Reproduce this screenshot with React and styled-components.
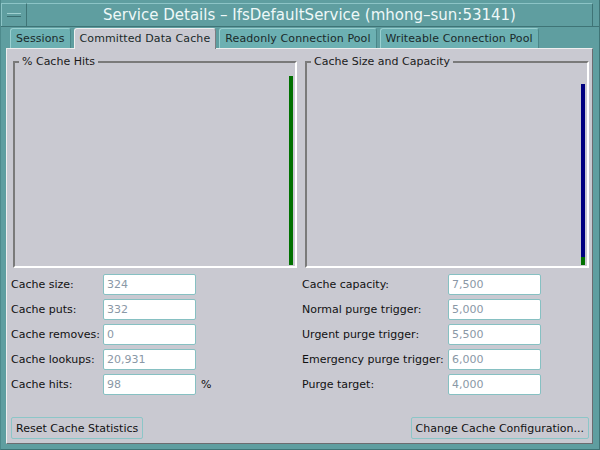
import React from "react";
import styled, { createGlobalStyle } from "styled-components";

const GlobalStyle = createGlobalStyle`
  html, body {
    margin: 0;
    padding: 0;
    background: #5f9ea0;
  }
  body {
    font-family: "DejaVu Sans", "Liberation Sans", sans-serif;
  }
`;

const leftStats = [
  { label: "Cache size:", value: "324" },
  { label: "Cache puts:", value: "332" },
  { label: "Cache removes:", value: "0" },
  { label: "Cache lookups:", value: "20,931" },
  { label: "Cache hits:", value: "98", unit: "%" },
];

const rightStats = [
  { label: "Cache capacity:", value: "7,500" },
  { label: "Normal purge trigger:", value: "5,000" },
  { label: "Urgent purge trigger:", value: "5,500" },
  { label: "Emergency purge trigger:", value: "6,000" },
  { label: "Purge target:", value: "4,000" },
];

const tabs = [
  "Sessions",
  "Committed Data Cache",
  "Readonly Connection Pool",
  "Writeable Connection Pool",
];

const CHART_HEIGHT = 193;

const App = () => {
  const hitPct = 98;
  const sizeMax = 8000;
  return (
    <Window>
      <GlobalStyle />
      <TitleBar>
        <MenuButton>
          <MenuGlyph />
        </MenuButton>
        <Title>Service Details – IfsDefaultService (mhong–sun:53141)</Title>
      </TitleBar>
      <Body>
        <TabRow>
          {tabs.map((t, i) => (
            <Tab key={t} $active={i === 1}>
              {t}
            </Tab>
          ))}
        </TabRow>
        <Panel>
          <ChartRow>
            <Group>
              <Legend>% Cache Hits</Legend>
              <BarTrack>
                <Bar
                  $color="#007000"
                  style={{ height: (hitPct / 100) * CHART_HEIGHT }}
                />
              </BarTrack>
            </Group>
            <Group>
              <Legend>Cache Size and Capacity</Legend>
              <BarTrack>
                <Bar
                  $color="#000080"
                  style={{ height: ((7500 - 324) / sizeMax) * CHART_HEIGHT }}
                />
                <Bar
                  $color="#007000"
                  style={{ height: (324 / sizeMax) * CHART_HEIGHT }}
                />
              </BarTrack>
            </Group>
          </ChartRow>
          <FormRow>
            <FormColumn $labelWidth={92} $width={291}>
              {leftStats.map((s) => (
                <React.Fragment key={s.label}>
                  <Label>{s.label}</Label>
                  <Field>{s.value}</Field>
                  <Unit>{s.unit}</Unit>
                </React.Fragment>
              ))}
            </FormColumn>
            <FormColumn $labelWidth={146}>
              {rightStats.map((s) => (
                <React.Fragment key={s.label}>
                  <Label>{s.label}</Label>
                  <Field>{s.value}</Field>
                  <Unit />
                </React.Fragment>
              ))}
            </FormColumn>
          </FormRow>
          <ButtonRow>
            <Button>Reset Cache Statistics</Button>
            <Button>Change Cache Configuration...</Button>
          </ButtonRow>
        </Panel>
      </Body>
    </Window>
  );
};

const Window = styled.div`
  width: 600px;
  height: 450px;
  box-sizing: border-box;
  background: #5f9ea0;
  display: flex;
  flex-direction: column;
  border-left: 1px solid #4d8a8c;
  border-right: 1px solid #3f7476;
  border-bottom: 1px solid #3f7476;
`;

const TitleBar = styled.div`
  display: flex;
  height: 27px;
  box-sizing: border-box;
  border-top: 3px solid #5f9ea0;
  border-bottom: 1px solid #3f7476;
  background: #5f9ea0;
`;

const MenuButton = styled.div`
  width: 26px;
  display: flex;
  align-items: center;
  justify-content: center;
  box-sizing: border-box;
  border-top: 1px solid #8cc4c6;
  border-left: 1px solid #8cc4c6;
  border-right: 1px solid #3f7476;
`;

const MenuGlyph = styled.span`
  width: 14px;
  height: 2px;
  border-top: 1px solid #9fd0d0;
  border-bottom: 1px solid #3a6e70;
  background: #5f9ea0;
`;

const Title = styled.div`
  flex: 1;
  text-align: center;
  color: #eef8f8;
  font-size: 15px;
  line-height: 22px;
  margin-right: 6px;
  border-top: 1px solid #8cc4c6;
  border-right: 1px solid #3f7476;
`;

const Body = styled.div`
  flex: 1;
  display: flex;
  flex-direction: column;
  padding: 1px 6px 5px 5px;
  min-height: 0;
`;

const TabRow = styled.div`
  display: flex;
  align-items: flex-end;
  gap: 3px;
  height: 20px;
  padding-left: 4px;
`;

const Tab = styled.div`
  height: ${(p) => (p.$active ? "21px" : "20px")};
  margin-bottom: ${(p) => (p.$active ? "-1px" : "0")};
  box-sizing: border-box;
  padding: 0 5px;
  font-size: 11px;
  letter-spacing: 0.1px;
  line-height: 19px;
  color: #1a2a2a;
  border-radius: 3px 3px 0 0;
  background: ${(p) => (p.$active ? "#c9c9d1" : "#6cb0b2")};
  border-top: 1px solid ${(p) => (p.$active ? "#f0f0f0" : "#9ad0d0")};
  border-left: 1px solid ${(p) => (p.$active ? "#f0f0f0" : "#9ad0d0")};
  border-right: 1px solid ${(p) => (p.$active ? "#7c7c80" : "#4a8688")};
  position: relative;
  z-index: ${(p) => (p.$active ? 1 : 0)};
`;

const Panel = styled.div`
  flex: 1;
  display: flex;
  flex-direction: column;
  background: #c9c9d1;
  border-top: 1px solid #eeeeee;
  border-left: 1px solid #eeeeee;
  border-right: 1px solid #6c6c70;
  border-bottom: 1px solid #6c6c70;
  padding: 6px 3px 4px 0;
`;

const ChartRow = styled.div`
  display: flex;
  gap: 8px;
  padding-left: 6px;
  height: 213px;
`;

const Group = styled.fieldset`
  flex: 1;
  margin: 0;
  padding: 0 2px 1px 0;
  min-width: 0;
  display: flex;
  justify-content: flex-end;
  align-items: flex-end;
  border-style: solid;
  border-width: 2px;
  border-color: #7a7a7a #ffffff #ffffff #7a7a7a;
`;

const Legend = styled.legend`
  font-size: 11px;
  line-height: 14px;
  color: #1a1a1a;
  padding: 0 3px;
  margin-left: 4px;
`;

const BarTrack = styled.div`
  display: flex;
  flex-direction: column;
  justify-content: flex-end;
  width: 4px;
  height: ${CHART_HEIGHT}px;
`;

const Bar = styled.div`
  width: 4px;
  background: ${(p) => p.$color};
`;

const FormRow = styled.div`
  display: flex;
  padding-left: 4px;
  margin-top: 6px;
`;

const FormColumn = styled.div`
  display: grid;
  grid-template-columns: ${(p) => p.$labelWidth}px 93px auto;
  grid-auto-rows: 21px;
  row-gap: 4px;
  align-items: center;
  width: ${(p) => (p.$width ? `${p.$width}px` : "auto")};
`;

const Label = styled.div`
  font-size: 11px;
  color: #111111;
  white-space: nowrap;
`;

const Field = styled.div`
  height: 21px;
  box-sizing: border-box;
  background: #ffffff;
  border: 1px solid #86c0c2;
  border-radius: 2px;
  padding-left: 3px;
  font-size: 11px;
  line-height: 19px;
  color: #8a98a6;
`;

const Unit = styled.div`
  font-size: 11px;
  color: #111111;
  padding-left: 5px;
`;

const ButtonRow = styled.div`
  margin-top: auto;
  display: flex;
  justify-content: space-between;
  padding-left: 4px;
`;

const Button = styled.button`
  height: 22px;
  box-sizing: border-box;
  padding: 0 4px;
  background: transparent;
  border: 1px solid #8cc6c8;
  border-radius: 2px;
  font-family: "DejaVu Sans", "Liberation Sans", sans-serif;
  font-size: 11px;
  color: #111111;
`;

export default App;
